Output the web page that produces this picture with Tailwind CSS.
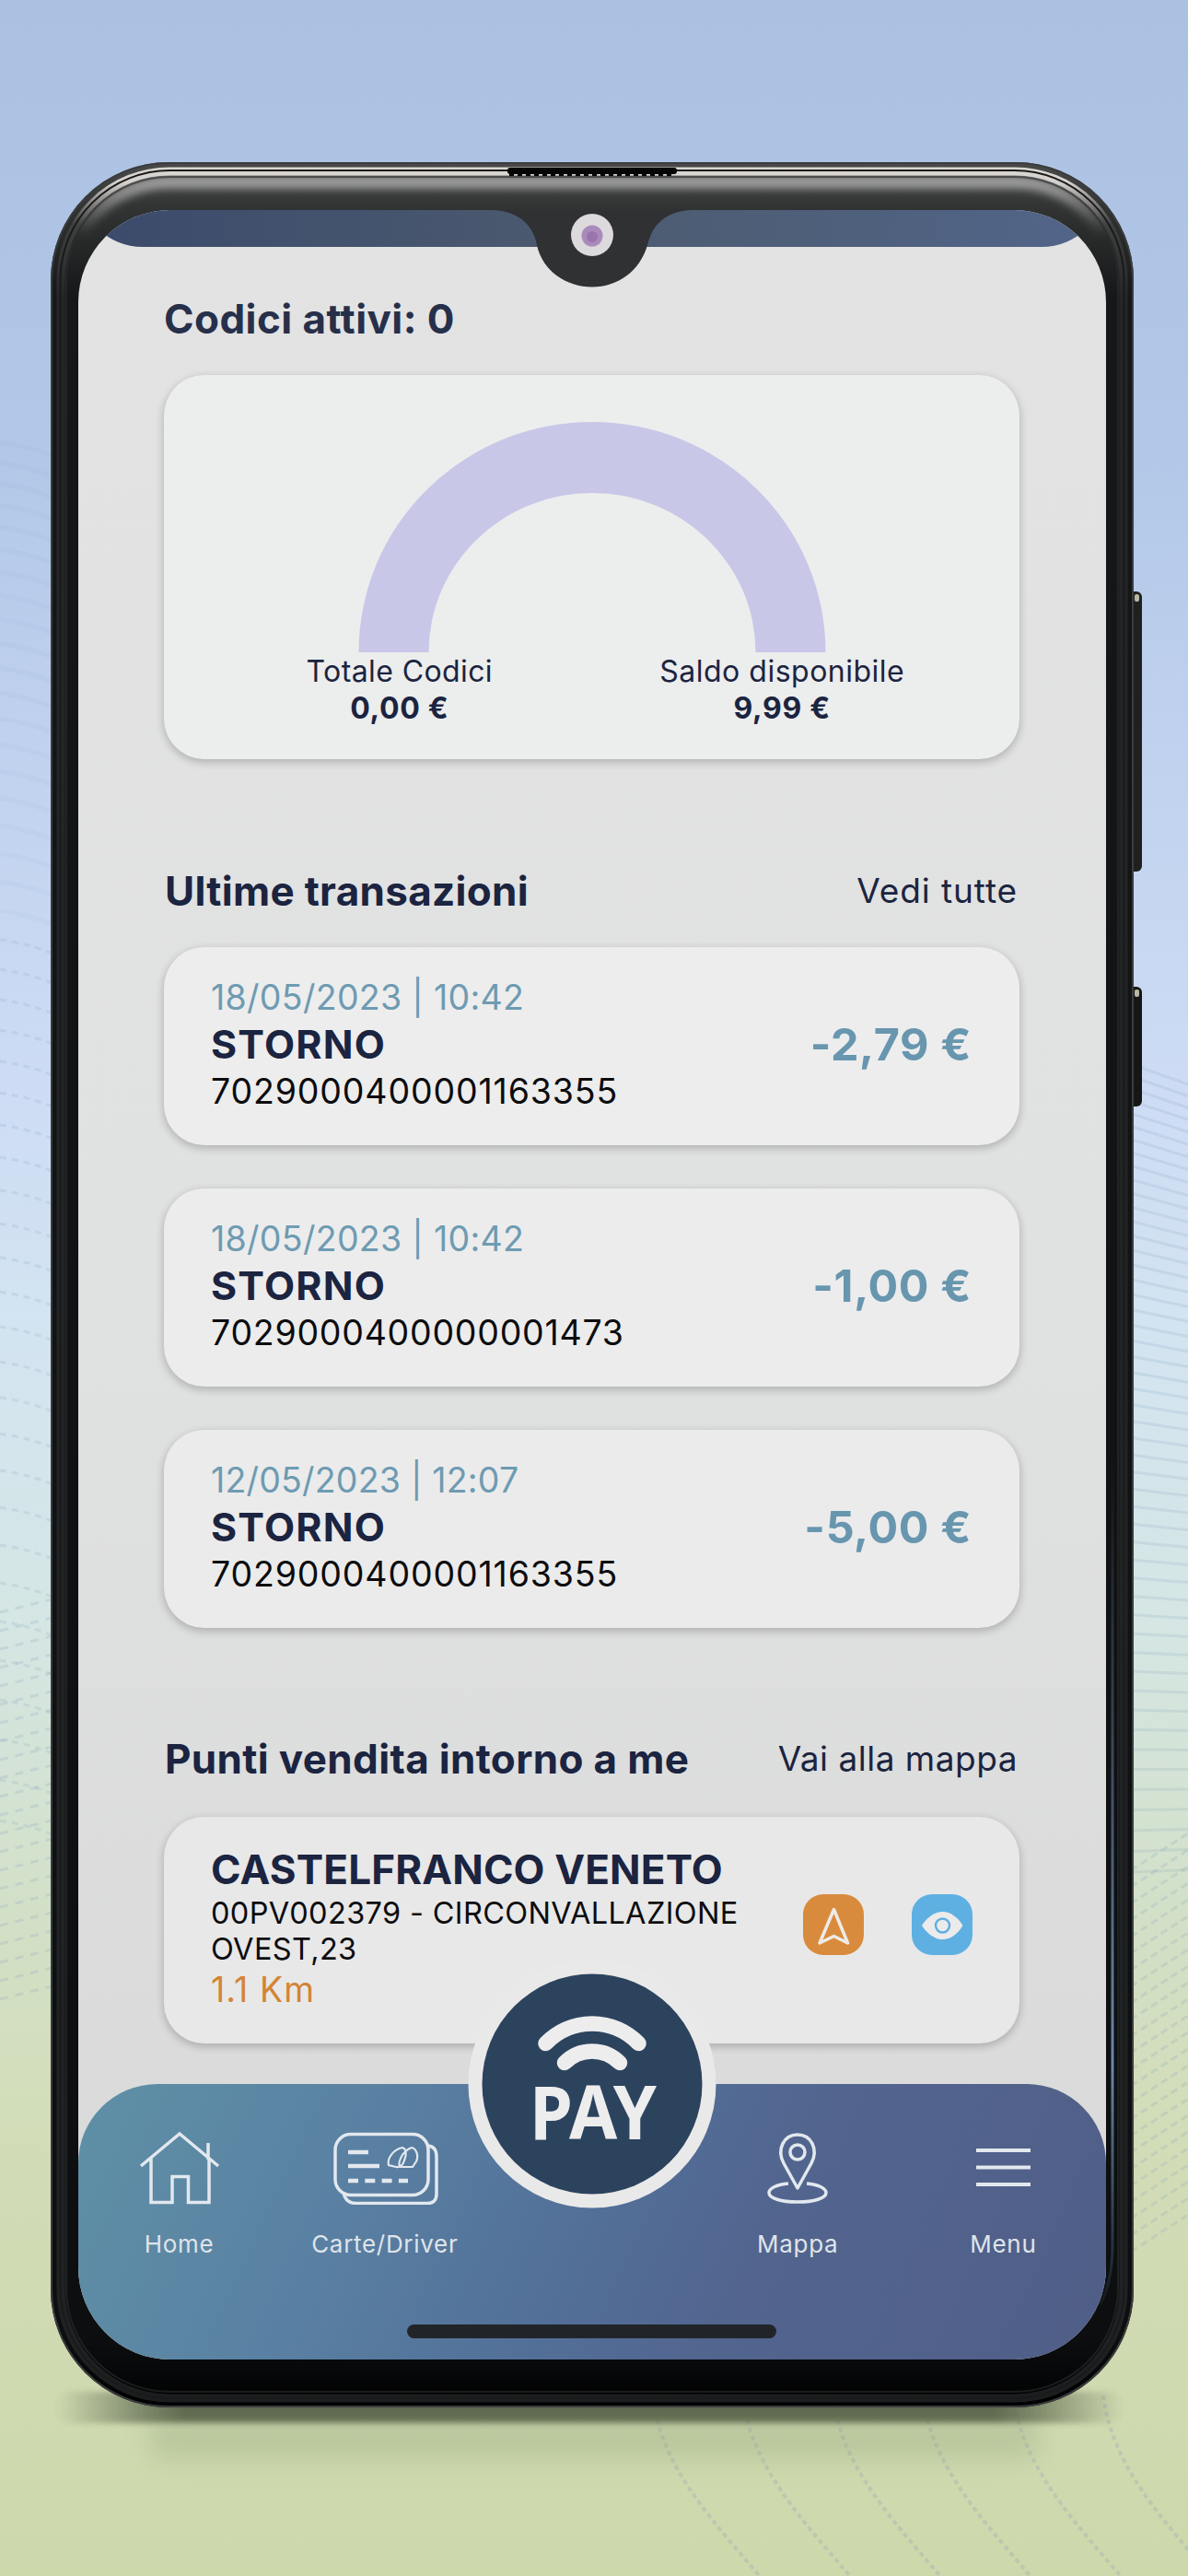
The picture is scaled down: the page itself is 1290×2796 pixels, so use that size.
<!DOCTYPE html>
<html lang="it">
<head>
    <meta charset="UTF-8">
    <title>Pay - Home</title>
    <script src="https://cdn.jsdelivr.net/npm/@tailwindcss/browser@4"></script>
</head>
<body class="relative w-[1290px] h-[2796px] overflow-hidden bg-[#cdd8ab] font-['Inter',sans-serif] text-[#1b2440]">
    <!-- Backdrop -->
    <svg class="absolute inset-0" width="1290" height="2796" viewBox="0 0 1290 2796">
        <defs>
            <linearGradient id="sky" x1="0" y1="0" x2="0" y2="1">
                <stop offset="0" stop-color="#abc1e1" />
                <stop offset=".18" stop-color="#b3c8e8" />
                <stop offset=".32" stop-color="#c3d4f0" />
                <stop offset=".42" stop-color="#cddcf4" />
                <stop offset=".52" stop-color="#d3e4f1" />
                <stop offset=".63" stop-color="#d5e6e4" />
                <stop offset=".74" stop-color="#d3e0c8" />
                <stop offset=".82" stop-color="#d2ddb9" />
                <stop offset="1" stop-color="#cdd8ab" />
            </linearGradient>
            <linearGradient id="ground" x1="0" y1="0" x2="1" y2="0">
                <stop offset="0" stop-color="#4d5840" stop-opacity="0" />
                <stop offset=".12" stop-color="#4d5840" />
                <stop offset=".88" stop-color="#4d5840" />
                <stop offset="1" stop-color="#4d5840" stop-opacity="0" />
            </linearGradient>
            <filter id="soft" x="-20%" y="-200%" width="140%" height="500%">
                <feGaussianBlur stdDeviation="14" />
            </filter>
            <filter id="soft3" x="-5%" y="-100%" width="110%" height="300%">
                <feGaussianBlur stdDeviation="3" />
            </filter>
        </defs>
        <rect width="1290" height="2796" fill="url(#sky)" />
        <g id="waves" fill="none"></g>
        <rect x="60" y="2596" width="1160" height="34" rx="17" fill="url(#ground)" opacity=".9" filter="url(#soft3)" />
        <rect x="160" y="2620" width="970" height="50" rx="20" fill="#8d9d76" opacity=".3" filter="url(#soft)" />
    </svg>

    <!-- Phone -->
    <div class="relative ml-[55px] mt-[176px] w-[1176px] h-[2437px] pt-[52px] px-[30px]">
        <svg class="absolute left-0 top-0" width="1190" height="2437" viewBox="0 0 1190 2437">
            <defs>
                <linearGradient id="body" gradientUnits="userSpaceOnUse" x1="0" y1="0" x2="0" y2="2437">
                    <stop offset="0" stop-color="#4a4a4a" />
                    <stop offset=".02" stop-color="#323434" />
                    <stop offset=".06" stop-color="#161718" />
                    <stop offset=".97" stop-color="#0c0e10" />
                    <stop offset="1" stop-color="#000" />
                </linearGradient>
                <linearGradient id="shine" gradientUnits="userSpaceOnUse" x1="0" y1="0" x2="0" y2="150">
                    <stop offset="0" stop-color="#dedad6" />
                    <stop offset=".15" stop-color="#d4d0cc" />
                    <stop offset=".45" stop-color="#444" stop-opacity=".8" />
                    <stop offset="1" stop-color="#2c2f31" stop-opacity=".6" />
                </linearGradient>
                <linearGradient id="glow" gradientUnits="userSpaceOnUse" x1="0" y1="12" x2="0" y2="80">
                    <stop offset="0" stop-color="#aaa" />
                    <stop offset=".35" stop-color="#8a8a8a" />
                    <stop offset="1" stop-color="#777" stop-opacity="0" />
                </linearGradient>
                <linearGradient id="edge" gradientUnits="userSpaceOnUse" x1="0" y1="1400" x2="0" y2="2350">
                    <stop offset="0" stop-color="#5f7fa0" stop-opacity="0" />
                    <stop offset=".7" stop-color="#6b88a8" />
                    <stop offset="1" stop-color="#5f7fa0" stop-opacity="0" />
                </linearGradient>
                <filter id="blur4" x="-5%" y="-5%" width="110%" height="110%">
                    <feGaussianBlur stdDeviation="4" />
                </filter>
            </defs>
            <!-- side buttons -->
            <rect x="1168" y="466" width="17" height="304" rx="6" fill="#20211f" />
            <rect x="1177" y="469" width="5" height="8" rx="2" fill="#b9b8a8" />
            <rect x="1168" y="895" width="17" height="130" rx="6" fill="#161715" />
            <rect x="1177" y="898" width="5" height="8" rx="2" fill="#b9b8a8" />
            <rect x="0" y="0" width="1176" height="2437" rx="128" fill="url(#body)" />
            <rect x="1" y="1" width="1174" height="2435" rx="127" fill="none" stroke="#3a3c3d" stroke-width="2" />
            <rect x="18" y="22" width="1140" height="2392" rx="110" fill="none" stroke="url(#glow)" stroke-width="14" filter="url(#blur4)" />
            <rect x="11" y="10" width="1154" height="2417" rx="118" fill="none" stroke="url(#shine)" stroke-width="9" />
            <rect x="10.500" y="9" width="1155" height="2418" rx="119" fill="none" stroke="#1a1a1a" stroke-width="2" />
            <rect x="17" y="16" width="1142" height="2404" rx="112" fill="none" stroke="#2c2e2f" stroke-width="2" stroke-opacity=".6" />
            <path d="M1153 1400V2260Q1153 2300 1140 2325" fill="none" stroke="url(#edge)" stroke-width="3" />
            <!-- speaker grille -->
            <rect x="496" y="6" width="184" height="7" rx="3" fill="#060606" />
            <path d="M498 12H678" stroke="#060606" stroke-width="6" stroke-dasharray="5 4" />
        </svg>

        <!-- Screen -->
        <main class="relative w-[1116px] h-[2333px] overflow-hidden rounded-[100px] bg-linear-to-b from-[#e3e3e3] via-[#e0e1e1] to-[#d9d9d9] px-[93px]">
            <div class="absolute inset-x-0 -top-[160px] h-[200px] rounded-b-[70px] bg-linear-to-r from-[#3b4a6b] via-[#4c5b6f] to-[#52658a]"></div>

            <!-- Notch -->
            <svg class="absolute left-[450px] top-0" width="220" height="90" viewBox="0 0 220 90">
                <path d="M0 0C28 1 44 16 48 38C54 66 80 83.500 108 83.500S160 66 168 38C173 16 188 1 216 0Z" fill="#2f3132" />
                <circle cx="108" cy="27" r="23" fill="#dcdadd" />
                <circle cx="108" cy="28" r="11.500" fill="#a98bbb" />
                <circle cx="108" cy="29" r="6" fill="#9a74ad" />
            </svg>

            <h1 class="pt-[88px] text-[44px] leading-[60px] font-bold tracking-[0.45px] text-[#27304a]">Codici attivi: 0</h1>

            <!-- Balance gauge -->
            <section class="mt-[31px] h-[417px] w-[929px] rounded-[44px] bg-[#eceded] px-[50px] pt-[51px] shadow-[0_3px_9px_1px_rgba(0,0,0,0.2)]">
                <svg class="mx-auto block" width="508" height="250" viewBox="0 0 508 250">
                    <path d="M0.500 250A253.500 250 0 0 1 507.500 250H431.500A177.500 173 0 0 0 76.500 250Z" fill="#c9c7e8" />
                </svg>
                <div class="mt-px -ml-0.5 grid grid-cols-2 text-center text-[32px] leading-[39px]">
                    <span class="tracking-[0.4px]">Totale Codici</span>
                    <span class="tracking-[0.5px]">Saldo disponibile</span>
                    <b class="mt-px font-bold tracking-[0.7px]">0,00 €</b>
                    <b class="mt-px font-bold tracking-[0.7px]">9,99 €</b>
                </div>
            </section>

            <!-- Transactions -->
            <div class="mt-[113px] flex w-[929px] items-center justify-between pl-px pr-[2px] leading-[60px]">
                <h2 class="text-[44px] font-bold tracking-[0.3px]">Ultime transazioni</h2>
                <a class="text-[37px] tracking-[0.9px]">Vedi tutte</a>
            </div>
            <ul class="mt-[31px] flex w-[929px] flex-col gap-[47px]">
                <li class="flex h-[215px] items-center justify-between rounded-[44px] bg-[#ededed] pl-[51px] pr-[52px] shadow-[0_3px_9px_1px_rgba(0,0,0,0.2)]">
                    <div class="-mt-[3px] leading-[50px]">
                        <p class="text-[37.5px] tracking-[0.3px] text-[#6e9bb2]">18/05/2023 | 10:42</p>
                        <p class="text-[43px] font-bold tracking-[1.2px]">STORNO</p>
                        <p class="mt-0.5 text-[37.5px] tracking-[0.85px] text-[#0c0c0e]">7029000400001163355</p>
                    </div>
                    <b class="-mt-0.5 text-[48.5px] font-bold tracking-[0.6px] text-[#6896af]">-2,79 €</b>
                </li>
                <li class="flex h-[215px] items-center justify-between rounded-[44px] bg-[#ececec] pl-[51px] pr-[52px] shadow-[0_3px_9px_1px_rgba(0,0,0,0.2)]">
                    <div class="-mt-[3px] leading-[50px]">
                        <p class="text-[37.5px] tracking-[0.3px] text-[#6e9bb2]">18/05/2023 | 10:42</p>
                        <p class="text-[43px] font-bold tracking-[1.2px]">STORNO</p>
                        <p class="mt-0.5 text-[37.5px] tracking-[0.75px] text-[#0c0c0e]">7029000400000001473</p>
                    </div>
                    <b class="-mt-0.5 text-[48.5px] font-bold tracking-[0.6px] text-[#6896af]">-1,00 €</b>
                </li>
                <li class="flex h-[215px] items-center justify-between rounded-[44px] bg-[#ebebeb] pl-[51px] pr-[52px] shadow-[0_3px_9px_1px_rgba(0,0,0,0.2)]">
                    <div class="-mt-[3px] leading-[50px]">
                        <p class="text-[37.5px] tracking-[0.2px] text-[#6e9bb2]">12/05/2023 | 12:07</p>
                        <p class="text-[43px] font-bold tracking-[1.2px]">STORNO</p>
                        <p class="mt-0.5 text-[37.5px] tracking-[0.85px] text-[#0c0c0e]">7029000400001163355</p>
                    </div>
                    <b class="-mt-0.5 text-[48.5px] font-bold tracking-[0.6px] text-[#6896af]">-5,00 €</b>
                </li>
            </ul>

            <!-- Nearby shops -->
            <div class="mt-[112px] flex w-[929px] items-center justify-between pl-px pr-[2px] leading-[60px]">
                <h2 class="text-[44px] font-bold tracking-[0.35px]">Punti vendita intorno a me</h2>
                <a class="text-[37px] tracking-[0.5px]">Vai alla mappa</a>
            </div>
            <section class="mt-[33px] flex h-[246px] w-[929px] items-start justify-between rounded-[44px] bg-[#e8e8e8] pl-[51px] pr-[51px] pt-[32px] shadow-[0_3px_9px_1px_rgba(0,0,0,0.2)]">
                <div>
                    <h3 class="text-[44px] leading-[50px] font-bold tracking-[0.15px]">CASTELFRANCO VENETO</h3>
                    <p class="mt-[3px] text-[32.5px] leading-[39px] tracking-[0.35px] text-[#0c0c0e]">00PV002379 - CIRCONVALLAZIONE<br>OVEST,23</p>
                    <p class="text-[37.5px] leading-[50px] tracking-[1.1px] text-[#d38534]">1.1 Km</p>
                </div>
                <div class="mt-[52px] flex gap-[52px]">
                    <div class="size-[66px] rounded-[22px] bg-[#d98b3d]">
                        <svg width="66" height="66" viewBox="0 0 66 66" fill="none" stroke="#efebe6" stroke-width="3.500" stroke-linejoin="round">
                            <path d="M33.500 16.500L48.500 53L33.500 45.500L18 53Z" />
                        </svg>
                    </div>
                    <div class="size-[66px] rounded-[22px] bg-[#5eb0e2]">
                        <svg width="66" height="66" viewBox="0 0 66 66">
                            <path d="M11 34C17 25 25 19 33.500 19S50 25 55.500 34C50 43 42 49 33.500 49S17 43 11 34Z" fill="#ebebeb" />
                            <circle cx="33.500" cy="34" r="7.500" fill="none" stroke="#5eb0e2" stroke-width="2.500" />
                        </svg>
                    </div>
                </div>
            </section>

            <!-- Bottom navigation -->
            <nav class="absolute inset-x-0 bottom-0 grid h-[299px] grid-cols-5 rounded-t-[86px] bg-linear-[115deg,#5f90a6_0%,#5a82a3_25%,#526f98_50%,#52658f_65%,#505e87_100%] pt-[51px] text-center text-[26px] leading-[34px] tracking-[0.7px] text-[#dfe4ea]">
                <a class="-ml-1 flex flex-col items-center">
                    <svg class="ml-px" width="88" height="80" viewBox="0 0 88 80" fill="none" stroke="#e2e8ee" stroke-width="3.500">
                        <path d="M2 38L44 3L86 38M13 29V77.500H36V49.500H53.500V77.500H76V29M75 31V13" />
                    </svg>
                    <span class="mt-[26px]">Home</span>
                </a>
                <a class="-ml-1 flex flex-col items-center">
                    <svg class="ml-[3px]" width="116" height="80" viewBox="0 0 116 80" fill="none" stroke="#e2e8ee" stroke-width="3.500">
                        <rect x="3" y="3.500" width="101" height="66" rx="17" />
                        <path d="M104 16Q113 17 113 28V68Q113 79.500 101 78.500H26Q14 78.500 12 67" />
                        <path d="M17 23H39M17 38H51" stroke-width="4.500" />
                        <path d="M17 54H82" stroke-width="4.500" stroke-dasharray="11 7.300" />
                        <path d="M61 37C59 30 66 20 76 18C80 19 81 25 78 32C76 38 73 40 69 39ZM86 18C91 19 94 27 91 33L87 39H74C70 36 75 22 86 18Z" stroke-width="2.200" />
                    </svg>
                    <span class="mt-[26px]">Carte/Driver</span>
                </a>
                <span></span>
                <a class="flex flex-col items-center">
                    <svg width="68" height="80" viewBox="0 0 68 80" fill="none" stroke="#e2e8ee" stroke-width="3.500" stroke-linejoin="round">
                        <path d="M34 62L19 35C11 20 19 4 34 4S57 20 49 35Z" />
                        <circle cx="34" cy="23" r="8" />
                        <path d="M24 57C12 58 3 62 3 67C3 73 16 77 34 77S65 73 65 67C65 62 56 58 44 57" />
                    </svg>
                    <span class="mt-[26px]">Mappa</span>
                </a>
                <a class="flex flex-col items-center">
                    <svg class="ml-0.5" width="60" height="80" viewBox="0 0 60 80" fill="none" stroke="#e2e8ee" stroke-width="4">
                        <path d="M0 21H59M0 39.500H59M0 58H59" />
                    </svg>
                    <span class="mt-[26px]">Menu</span>
                </a>
            </nav>

            <!-- Pay button -->
            <svg class="absolute left-[423px] top-[1899px]" width="270" height="270" viewBox="0 0 270 270">
                <circle cx="135" cy="135" r="134.500" fill="#e9e9e9" />
                <circle cx="135" cy="135" r="119.500" fill="#2c435e" />
                <path d="M84.500 91A70 70 0 0 1 185.500 91M105 112A42 42 0 0 1 165 112" fill="none" stroke="#ededee" stroke-width="16.500" stroke-linecap="round" />
                <text x="67" y="195" textLength="138" lengthAdjust="spacingAndGlyphs" font-family="Noto Sans, sans-serif" font-weight="700" font-size="81" fill="#ededee">PAY</text>
            </svg>

            <div class="absolute bottom-[23px] left-[357px] h-[15px] w-[401px] rounded-full bg-[#212529]"></div>
        </main>
    </div>

    <script>
        // wave lines on both sides and below the phone
        const waves = document.getElementById('waves');
        function wave(d, opacity, dash, width) {
            const p = document.createElementNS('http://www.w3.org/2000/svg', 'path');
            p.setAttribute('d', d);
            p.setAttribute('stroke', '#7f9db8');
            p.setAttribute('stroke-width', width || 2);
            p.setAttribute('stroke-opacity', opacity);
            if (dash) p.setAttribute('stroke-dasharray', dash);
            waves.appendChild(p);
        }
        for (let i = 0; i < 46; i++) {
            const y = 480 + i * 22 + i * i * 0.25;
            wave(`M0 ${y}Q30 ${y + 4} 60 ${y + 16}`, i < 20 ? 0.06 : 0.18, i < 20 ? '' : '7 6', i < 20 ? 5 : 3);
        }
        for (let i = 0; i < 22; i++) {
            wave(`M0 ${1750 + i * 20}L60 ${1735 + i * 20}`, 0.2, '9 8', 3);
        }
        for (let i = 0; i < 50; i++) {
            const y = 1155 + i * 13 + i * i * 0.1;
            wave(`M1228 ${y}L1290 ${y + 22 - i * 0.5}`, 0.17, '', 3);
        }
        for (let i = 0; i < 24; i++) {
            wave(`M1228 ${2030 + i * 18}L1290 ${1990 + i * 18}`, 0.2, '8 5', 3);
        }
        for (let i = 0; i < 7; i++) {
            const x = 708 + i * 98;
            wave(`M${x} 2600C${x + 10} 2680 ${x + 70} 2740 ${x + 120} 2800`, 0.25, '5 4', 4);
        }
    </script>
</body>
</html>
